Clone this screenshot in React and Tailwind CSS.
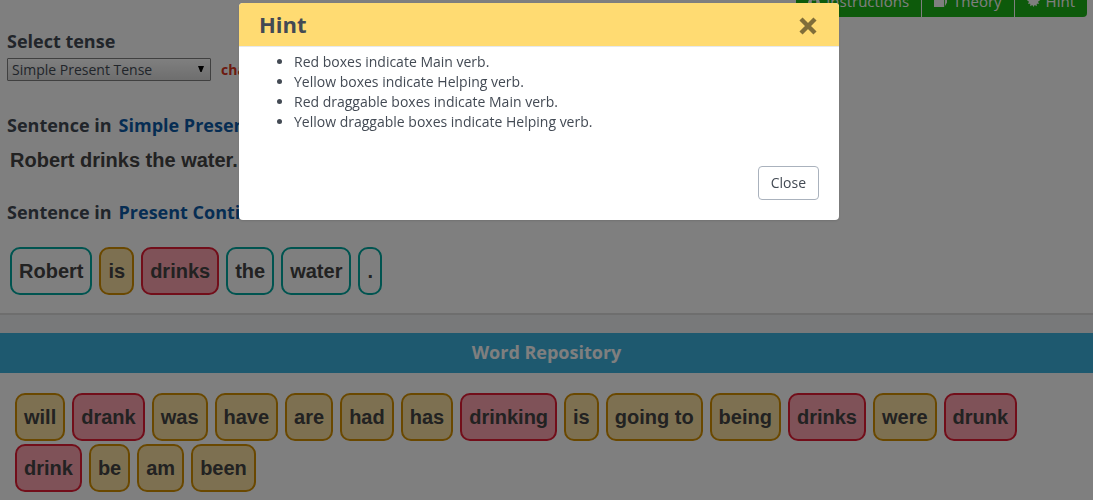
import React, { useState } from "react";
import { FaBinoculars } from "react-icons/fa";

const sentence = [
  ["Robert", "plain"],
  ["is", "helping"],
  ["drinks", "main"],
  ["the", "plain"],
  ["water", "plain"],
  [".", "plain"],
];

const repository = [
  ["will", "helping"],
  ["drank", "main"],
  ["was", "helping"],
  ["have", "helping"],
  ["are", "helping"],
  ["had", "helping"],
  ["has", "helping"],
  ["drinking", "main"],
  ["is", "helping"],
  ["going to", "helping"],
  ["being", "helping"],
  ["drinks", "main"],
  ["were", "helping"],
  ["drunk", "main"],
  ["drink", "main"],
  ["be", "helping"],
  ["am", "helping"],
  ["been", "helping"],
];

const hints = [
  "Red boxes indicate Main verb.",
  "Yellow boxes indicate Helping verb.",
  "Red draggable boxes indicate Main verb.",
  "Yellow draggable boxes indicate Helping verb.",
];

const tones = {
  plain: "border-[#00a8a0]",
  helping: "border-[#d49000] bg-[#fae0a2]",
  main: "border-[#e41c34] bg-[#fea4b0]",
};

const starPoints = Array.from({ length: 24 }, (_, i) => {
  const radius = i % 2 ? 4.6 : 6.5;
  const angle = (i * Math.PI) / 12;
  return `${(6.5 + radius * Math.sin(angle)).toFixed(2)},${(6.5 - radius * Math.cos(angle)).toFixed(2)}`;
}).join(" ");

function StarIcon() {
  return (
    <svg viewBox="0 0 13 13" className="size-[13px]" fill="currentColor" aria-hidden="true">
      <polygon points={starPoints} />
    </svg>
  );
}

function BookIcon() {
  return (
    <svg viewBox="0 0 13 13" className="size-[13px]" fill="currentColor" aria-hidden="true">
      <path d="M0 3.2 2.6 0H13v8.6L11 12V3.2L12 1.4 10.2 3.2V13H0z" />
    </svg>
  );
}

function CrossIcon() {
  return (
    <svg viewBox="0 0 18 18" className="size-[18px]" stroke="currentColor" strokeWidth="4.4" aria-hidden="true">
      <path d="M2 2 16 16M16 2 2 16" />
    </svg>
  );
}

function Word({ text, tone }) {
  return (
    <li
      draggable={tone !== "plain"}
      className={`flex h-12 items-center rounded-[10px] border-2 px-[7px] font-['Liberation_Sans',sans-serif] text-xl font-bold text-[#444] ${tones[tone]}`}
    >
      {text}
    </li>
  );
}

function NavButton({ icon, children }) {
  return (
    <button
      type="button"
      className="flex h-[30px] items-center gap-1.5 bg-[#1ab416] px-3 text-[15px] text-white first:rounded-l last:rounded-r"
    >
      <span className="pb-1">{icon}</span>
      {children}
    </button>
  );
}

export default function App() {
  const [open, setOpen] = useState(true);

  return (
    <div className="h-screen overflow-hidden bg-[#f1f3f5] font-['Open_Sans','Noto_Sans',sans-serif] text-sm text-[#434a54]">
      <main className="bg-white">
        <section className="border-b-2 border-[#dcdcdc] pb-[18px] pl-[7px]">
          <nav className="-mt-[13px] mr-1.5 flex justify-end gap-px">
            <NavButton icon={<FaBinoculars className="size-3" />}>Instructions</NavButton>
            <NavButton icon={<BookIcon />}>Theory</NavButton>
            <NavButton icon={<StarIcon />}>Hint</NavButton>
          </nav>
          <label htmlFor="tense" className="mt-3 block text-lg leading-6 font-bold">
            Select tense
          </label>
          <div className="mt-[5px] flex items-center gap-2.5">
            <div className="relative">
              <select
                id="tense"
                className="block h-[23px] w-[204px] appearance-none rounded-[1px] border border-[#808080] bg-linear-to-b from-white to-[#dddddd] pl-1 text-sm leading-5"
              >
                <option>Simple Present Tense</option>
                <option>Present Continuous Tense</option>
              </select>
              <svg
                viewBox="0 0 6 6"
                className="pointer-events-none absolute top-2 right-[7px] size-1.5 text-black"
                fill="currentColor"
                aria-hidden="true"
              >
                <path d="M0 0h6L3.6 6H2.4z" />
              </svg>
            </div>
            <a href="#change" className="text-sm font-bold text-[#d8351c]">
              change
            </a>
          </div>
          <h2 className="mt-8 flex gap-[7px] text-lg leading-6 font-bold">
            Sentence in <span className="text-[#0d5aa7]">Simple Present Tense</span>
          </h2>
          <p className="mt-[9px] pl-[3px] font-['Liberation_Sans',sans-serif] text-xl leading-7 font-bold text-[#444]">
            Robert drinks the water.
          </p>
          <h2 className="mt-[26px] flex gap-[7px] text-lg leading-6 font-bold">
            Sentence in <span className="text-[#0d5aa7]">Present Continuous Tense</span>
          </h2>
          <ul className="mt-[23px] flex flex-wrap gap-x-[7px] gap-y-[3px] pl-[3px]">
            {sentence.map(([text, tone]) => (
              <Word key={text} text={text} tone={tone} />
            ))}
          </ul>
        </section>
      </main>

      <section className="mt-[18px] bg-white pb-5">
        <h2 className="bg-[#3cb2de] pb-0.5 text-center text-lg leading-[38px] font-bold text-white">
          Word Repository
        </h2>
        <ul className="flex flex-wrap gap-x-[7px] gap-y-[3px] px-[15px] pt-5">
          {repository.map(([text, tone]) => (
            <Word key={text} text={text} tone={tone} />
          ))}
        </ul>
      </section>

      {open && (
        <div className="fixed inset-0 bg-black/50 pt-[3px] pr-[15px]">
          <div
            role="dialog"
            aria-modal="true"
            aria-labelledby="hint-title"
            className="mx-auto max-w-[600px] overflow-hidden rounded bg-white shadow-sm"
          >
            <header className="flex h-11 items-start justify-between border-b border-[#e6e9ed] bg-[#ffdb72] px-5 pt-[5px]">
              <h1 id="hint-title" className="text-[22px] leading-8 font-bold">
                Hint
              </h1>
              <button
                type="button"
                aria-label="Close hint"
                onClick={() => setOpen(false)}
                className="flex h-9 items-center pr-[2px] text-[#806e39]"
              >
                <CrossIcon />
              </button>
            </header>
            <ul className="list-disc pt-[5px] pl-[55px] leading-5">
              {hints.map((hint) => (
                <li key={hint}>{hint}</li>
              ))}
            </ul>
            <footer className="flex justify-end px-5 pt-[34px] pb-5">
              <button
                type="button"
                onClick={() => setOpen(false)}
                className="h-[34px] rounded border border-[#aab2bd] px-3 text-sm"
              >
                Close
              </button>
            </footer>
          </div>
        </div>
      )}
    </div>
  );
}
